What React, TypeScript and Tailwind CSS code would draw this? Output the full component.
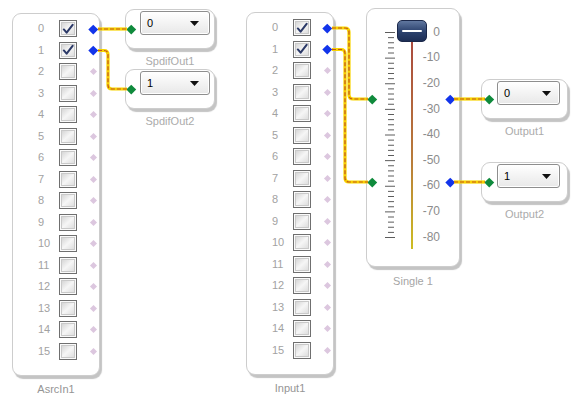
import clsx from 'clsx';

const ROWS = Array.from({ length: 16 }, (_, i) => i);
const TICKS = Array.from({ length: 41 }, (_, i) => i);
const DB = ['0', '-10', '-20', '-30', '-40', '-50', '-60', '-70', '-80'];

const boxCls =
  'rounded-[9px] border border-[#cdcdcd] bg-white shadow-[2px_3px_1px_#c4c4c4]';

function Port({ kind, className }: { kind: 'in' | 'out' | 'idle'; className?: string }) {
  if (kind === 'idle') {
    return <div className={clsx('h-[5px] w-[5px] rotate-45 bg-[#dcc7df]', className)} />;
  }
  return (
    <div
      className={clsx(
        'h-[6.5px] w-[6.5px] rotate-45',
        kind === 'in' ? 'bg-[#0f8a3c]' : 'bg-[#1234ea]',
        className,
      )}
    />
  );
}

function Check({ checked }: { checked?: boolean }) {
  return (
    <div className="h-[17px] w-[18px] shrink-0 border border-[#6f6f6f] bg-[#fafafa] p-px">
      <div className="flex h-full w-full items-center justify-center border border-[#c9c9c9] bg-linear-to-br from-[#d6d6d6] via-[#f6f6f6] to-[#dedede]">
        {checked && (
          <svg width="13" height="12" viewBox="0 0 13 12">
            <path d="M2 6.5 L5 10 L11.5 1.5" fill="none" stroke="#2c3a68" strokeWidth="2.2" strokeLinecap="round" strokeLinejoin="round" />
          </svg>
        )}
      </div>
    </div>
  );
}

function ChannelNode({ className, name, active }: { className: string; name: string; active: number }) {
  return (
    <div className={clsx('absolute flex w-[88px] flex-col items-center', className)}>
      <div className={clsx(boxCls, 'h-[363px] w-full pl-[25px] pt-[4px]')}>
        {ROWS.map((i) => (
          <div key={i} className="flex h-[21.5px] items-center">
            <span className="w-[21px] shrink-0 text-[11px] leading-none text-[#a2a2a2]">{i}</span>
            <Check checked={i < active} />
            <div className="ml-[10px] flex w-[12px] shrink-0 justify-center">
              <Port kind={i < active ? 'out' : 'idle'} />
            </div>
          </div>
        ))}
      </div>
      <span className="mt-[7px] text-[11px] leading-[12px] text-[#959595]">{name}</span>
    </div>
  );
}

function Dropdown({ value, className }: { value: string; className: string }) {
  return (
    <div
      className={clsx(
        'flex h-[24px] items-center justify-between rounded-[3px] border border-[#8e8e8e] bg-linear-to-b from-white to-[#e8e8e8] pl-[6px] shadow-[inset_0_0_0_1px_#fff]',
        className,
      )}
    >
      <span className="text-[11px] leading-none text-black">{value}</span>
      <svg width="9" height="5" viewBox="0 0 9 5">
        <path d="M0 0 H9 L4.5 5 Z" fill="#111" />
      </svg>
    </div>
  );
}

function SelectNode({
  className,
  name,
  value,
  pad,
  dd,
  port,
}: {
  className: string;
  name: string;
  value: string;
  pad: string;
  dd: string;
  port: string;
}) {
  return (
    <div className={clsx('absolute flex flex-col items-center', className)}>
      <div className={clsx(boxCls, 'relative h-[40px] w-full rounded-[8px] pt-px', pad)}>
        <Port kind="in" className={clsx('absolute top-[16px]', port)} />
        <Dropdown value={value} className={dd} />
      </div>
      <span className="mt-[6px] text-[11px] leading-[12px] text-[#ababab]">{name}</span>
    </div>
  );
}

function SingleNode() {
  return (
    <div className="absolute left-[366px] top-[8px] flex w-[94px] flex-col items-center">
      <div className={clsx(boxCls, 'relative flex h-[259px] w-full')}>
        <svg width="50" height="257" className="shrink-0">
          <defs>
            <linearGradient id="trk" x1="0" y1="0" x2="0" y2="1">
              <stop offset="0" stopColor="#a9473f" />
              <stop offset="0.6" stopColor="#b97d3a" />
              <stop offset="1" stopColor="#cdbd22" />
            </linearGradient>
          </defs>
          {TICKS.map((i) => {
            const y = 23.5 + i * 5.125;
            const major = i % 5 === 0;
            return (
              <line key={i} x1={major ? 18 : 21} x2={major ? 28 : 27} y1={y} y2={y} stroke="#5c5c5c" strokeWidth="1" />
            );
          })}
          <rect x="44" y="24" width="2" height="216" fill="url(#trk)" />
        </svg>
        <div className="flex w-[23px] flex-col pt-[10px]">
          {DB.map((d) => (
            <div key={d} className="flex h-[25.6px] items-center justify-end text-[12px] leading-none text-[#8c8c8c]">
              {d}
            </div>
          ))}
        </div>
        <div className="absolute left-[30px] top-[11px] flex h-[22px] w-[30px] items-center justify-center rounded-[5px] border border-[#1b284a] bg-linear-to-b from-[#60779f] via-[#2e4470] to-[#1d2e55]">
          <div className="h-[2px] w-[20px] rounded-full bg-white" />
        </div>
        <Port kind="in" className="absolute left-[2px] top-[87px]" />
        <Port kind="out" className="absolute left-[80px] top-[87px]" />
        <Port kind="in" className="absolute left-[2px] top-[170px]" />
        <Port kind="out" className="absolute left-[80px] top-[170px]" />
      </div>
      <span className="mt-[8px] text-[11px] leading-[12px] text-[#a5a5a5]">Single 1</span>
    </div>
  );
}

const WIRES = [
  'M98 29 H127',
  'M98 50.5 H104 Q108 50.5 108 54.5 V85 Q108 89 112 89 H127',
  'M332 28 H345 Q349 28 349 32 V95 Q349 99 353 99 H368',
  'M332 49.5 H341 Q345 49.5 345 53.5 V178 Q345 182 349 182 H368',
  'M454 99 H485',
  'M454 182 H485',
];

export default function App() {
  return (
    <div className="relative h-[395px] w-[571px] overflow-hidden bg-white font-['Liberation_Sans',Arial,sans-serif]">
      <ChannelNode className="left-[12px] top-[13px]" name="AsrcIn1" active={2} />
      <ChannelNode className="left-[246px] top-[12px]" name="Input1" active={2} />

      <SelectNode className="left-[125px] top-[9px] w-[90px]" name="SpdifOut1" value="0" pad="pl-[14px]" dd="w-[70px] pr-[10px]" port="left-[2px]" />
      <SelectNode className="left-[125px] top-[69px] w-[90px]" name="SpdifOut2" value="1" pad="pl-[14px]" dd="w-[70px] pr-[10px]" port="left-[2px]" />

      <SingleNode />

      <SelectNode className="left-[481px] top-[79px] w-[87px]" name="Output1" value="0" pad="pl-[15px]" dd="w-[63px] pr-[8px]" port="left-[4px]" />
      <SelectNode className="left-[481px] top-[162px] w-[87px]" name="Output2" value="1" pad="pl-[15px]" dd="w-[63px] pr-[8px]" port="left-[4px]" />

      <svg width="571" height="395" className="pointer-events-none absolute inset-0 z-10">
        {WIRES.map((d) => (
          <g key={d} fill="none">
            <path d={d} stroke="#f8d400" strokeWidth="3.2" />
            <path d={d} stroke="#c2541c" strokeWidth="1.2" strokeDasharray="4 2" />
          </g>
        ))}
      </svg>
    </div>
  );
}
